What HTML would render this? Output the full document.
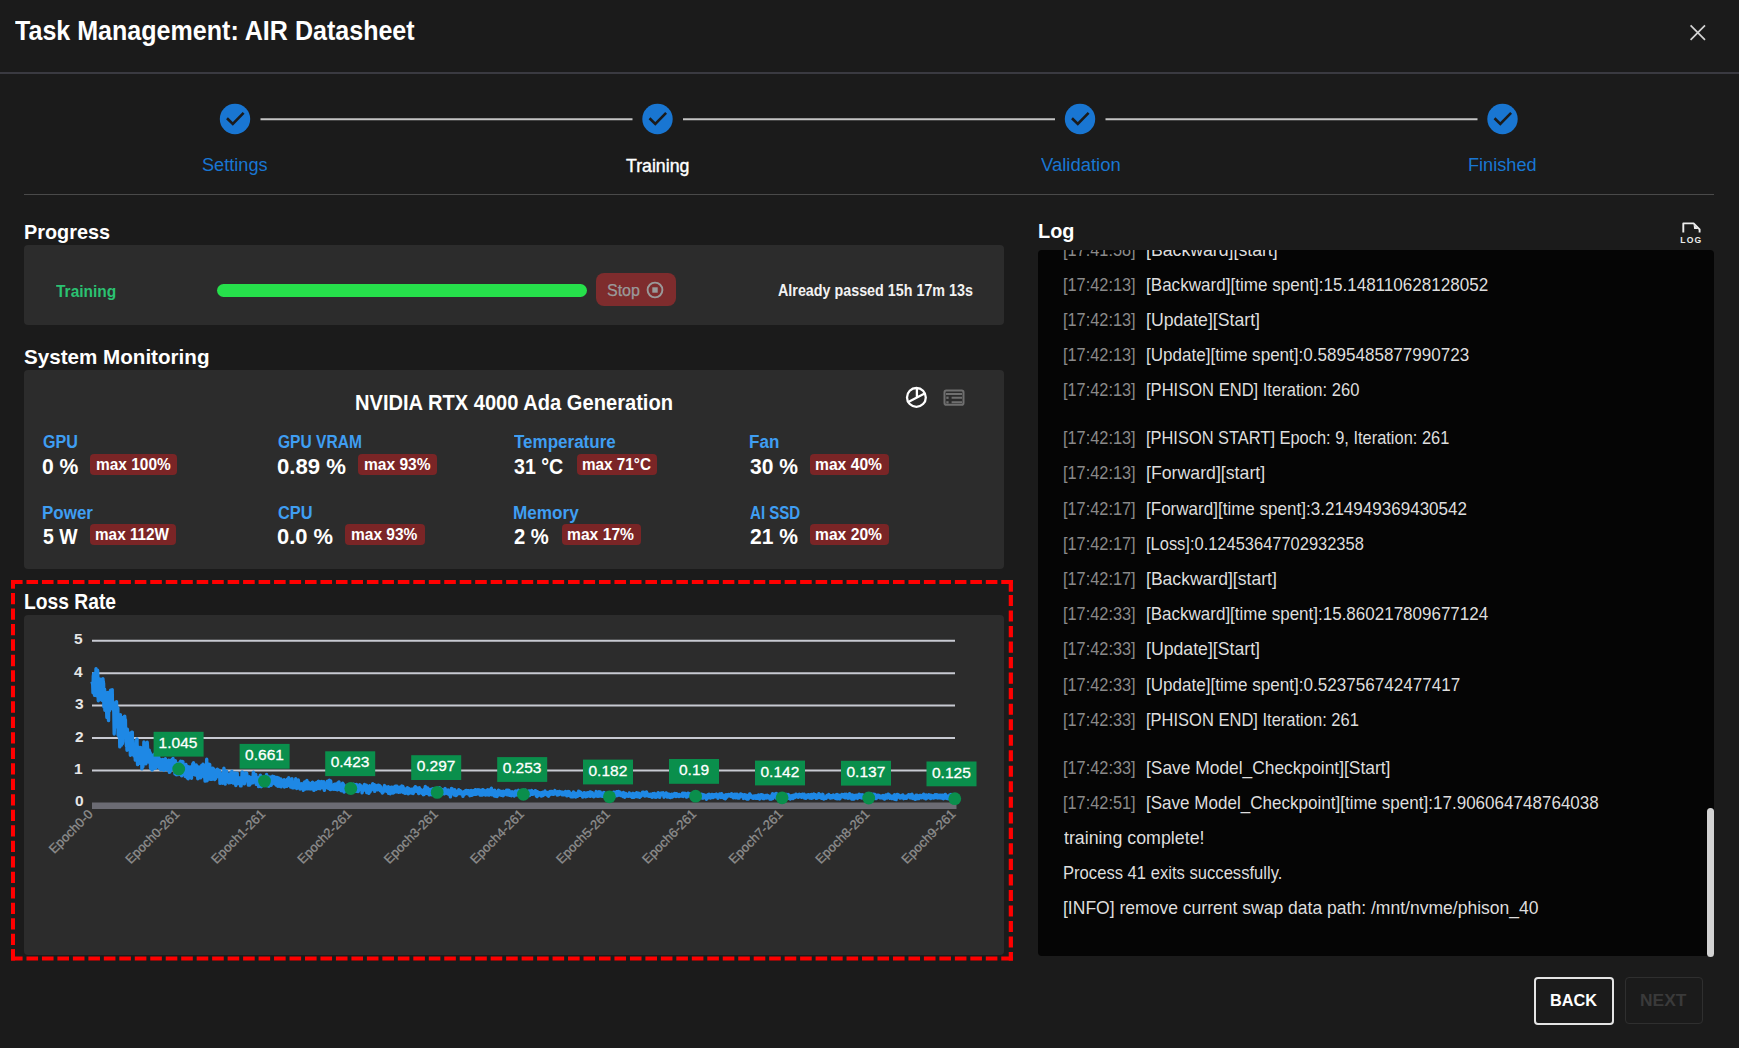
<!DOCTYPE html>
<html><head><meta charset="utf-8"><title>Task Management: AIR Datasheet</title>
<style>
html,body{margin:0;padding:0;}
body{width:1739px;height:1048px;background:#1b1b1b;position:relative;overflow:hidden;font-family:'Liberation Sans', sans-serif;}
.t{position:absolute;white-space:pre;line-height:1;transform-origin:0 0;}
.abs{position:absolute;}
.panel{position:absolute;background:#2c2c2c;border-radius:4px;}
.chart{position:absolute;left:0;top:0;}
</style></head><body>
<header>
<div class="abs" style="left:0;top:72px;width:1739px;height:2px;background:#3a3a41"></div>
<svg class="abs" style="left:1688px;top:23px" width="20" height="20" viewBox="0 0 20 20"><path d="M2.6 2.4 L17 16.8 M17 2.4 L2.6 16.8" stroke="#d4d4d4" stroke-width="1.7"/></svg>
</header>
<nav>
<svg class="abs" style="left:0;top:90px" width="1739" height="60" viewBox="0 90 1739 60">
<circle cx="235" cy="119" r="15.2" fill="#1976d2"/><path d="M227 118.2 L232.8 123.9 L243.6 112.9" fill="none" stroke="#1b1b1b" stroke-width="2.6"/><circle cx="657.5" cy="119" r="15.2" fill="#1976d2"/><path d="M649.5 118.2 L655.3 123.9 L666.1 112.9" fill="none" stroke="#1b1b1b" stroke-width="2.6"/><circle cx="1080" cy="119" r="15.2" fill="#1976d2"/><path d="M1072 118.2 L1077.8 123.9 L1088.6 112.9" fill="none" stroke="#1b1b1b" stroke-width="2.6"/><circle cx="1502.5" cy="119" r="15.2" fill="#1976d2"/><path d="M1494.5 118.2 L1500.3 123.9 L1511.1 112.9" fill="none" stroke="#1b1b1b" stroke-width="2.6"/><line x1="260.5" y1="119.3" x2="632.5" y2="119.3" stroke="#c4c4c4" stroke-width="2"/><line x1="683.0" y1="119.3" x2="1055" y2="119.3" stroke="#c4c4c4" stroke-width="2"/><line x1="1105.5" y1="119.3" x2="1477.5" y2="119.3" stroke="#c4c4c4" stroke-width="2"/></svg>
</nav>
<div class="abs" style="left:24px;top:193.5px;width:1690px;height:1.5px;background:#4a4a4a"></div>
<section>
<div class="panel" style="left:24px;top:245px;width:980px;height:80px"></div>
<div class="abs" style="left:217px;top:283.8px;width:370px;height:13px;border-radius:6.5px;background:#26e04b"></div>
<div class="abs" style="left:596px;top:272.6px;width:80px;height:33.8px;border-radius:8px;background:#7e2c2d"></div>
<svg class="abs" style="left:645px;top:280px" width="20" height="20" viewBox="0 0 20 20"><circle cx="10" cy="10" r="7.4" fill="none" stroke="#9a9a9a" stroke-width="1.9"/><rect x="7.3" y="7.3" width="5.4" height="5.4" fill="#9a9a9a"/></svg>
<div class="panel" style="left:24px;top:370.4px;width:980px;height:199px"></div>
<div class="abs" style="left:90.3px;top:454.3px;width:87.0px;height:20.7px;border-radius:4px;background:#7a2526"></div>
<div class="abs" style="left:358px;top:454.3px;width:79.2px;height:20.7px;border-radius:4px;background:#7a2526"></div>
<div class="abs" style="left:576.9px;top:454.3px;width:80.1px;height:20.7px;border-radius:4px;background:#7a2526"></div>
<div class="abs" style="left:810.4px;top:454.3px;width:78.4px;height:20.7px;border-radius:4px;background:#7a2526"></div>
<div class="abs" style="left:90.3px;top:524.3px;width:85.5px;height:20.7px;border-radius:4px;background:#7a2526"></div>
<div class="abs" style="left:345.4px;top:524.3px;width:79.2px;height:20.7px;border-radius:4px;background:#7a2526"></div>
<div class="abs" style="left:561.9px;top:524.3px;width:78.7px;height:20.7px;border-radius:4px;background:#7a2526"></div>
<div class="abs" style="left:810.4px;top:524.3px;width:78.4px;height:20.7px;border-radius:4px;background:#7a2526"></div>
<svg class="abs" style="left:904px;top:385px" width="25" height="25" viewBox="0 0 25 25"><circle cx="12.4" cy="12.4" r="9.4" fill="none" stroke="#ffffff" stroke-width="2.3"/><path d="M4.3 17 L20.6 8.4 M12.9 12.2 L12.9 3" stroke="#ffffff" stroke-width="2.3" fill="none"/></svg>
<svg class="abs" style="left:940px;top:386px" width="28" height="23" viewBox="0 0 28 23"><rect x="4.5" y="4.5" width="19" height="14.2" rx="1.8" fill="none" stroke="#6f6f6f" stroke-width="2"/><path d="M6 7.9 H22 M11.6 11.8 H22 M11.6 16.3 H22" stroke="#6f6f6f" stroke-width="2"/><rect x="6.3" y="10.6" width="2.3" height="2.3" fill="#6f6f6f"/><rect x="6.3" y="15.2" width="2.3" height="2.3" fill="#6f6f6f"/></svg>
<div class="panel" style="left:24px;top:615px;width:980px;height:340px"></div>
</section>
<section>
<div class="abs" style="left:1038px;top:250px;width:676px;height:706px;border-radius:4px;background:#050505;overflow:hidden">
<div class="abs" style="left:-1038px;top:-250px;width:1739px;height:1048px">
<span class="t" style="left:1062.92px;top:241px;font-size:18.5px;font-weight:400;color:#8a8a8a;transform:scaleX(0.8827);">[17:41:58]</span>
<span class="t" style="left:1146.04px;top:241px;font-size:18.5px;font-weight:400;color:#dedede;transform:scaleX(0.9559);">[Backward][start]</span>
<span class="t" style="left:1062.92px;top:276px;font-size:18.5px;font-weight:400;color:#8a8a8a;transform:scaleX(0.8827);">[17:42:13]</span>
<span class="t" style="left:1146.08px;top:276px;font-size:18.5px;font-weight:400;color:#dedede;transform:scaleX(0.9227);">[Backward][time spent]:15.148110628128052</span>
<span class="t" style="left:1062.92px;top:311px;font-size:18.5px;font-weight:400;color:#8a8a8a;transform:scaleX(0.8827);">[17:42:13]</span>
<span class="t" style="left:1146.04px;top:311px;font-size:18.5px;font-weight:400;color:#dedede;transform:scaleX(0.9559);">[Update][Start]</span>
<span class="t" style="left:1062.92px;top:346px;font-size:18.5px;font-weight:400;color:#8a8a8a;transform:scaleX(0.8827);">[17:42:13]</span>
<span class="t" style="left:1146.08px;top:346px;font-size:18.5px;font-weight:400;color:#dedede;transform:scaleX(0.9215);">[Update][time spent]:0.5895485877990723</span>
<span class="t" style="left:1062.92px;top:381px;font-size:18.5px;font-weight:400;color:#8a8a8a;transform:scaleX(0.8827);">[17:42:13]</span>
<span class="t" style="left:1146.11px;top:381px;font-size:18.5px;font-weight:400;color:#dedede;transform:scaleX(0.8945);">[PHISON END] Iteration: 260</span>
<span class="t" style="left:1062.92px;top:429px;font-size:18.5px;font-weight:400;color:#8a8a8a;transform:scaleX(0.8827);">[17:42:13]</span>
<span class="t" style="left:1146.11px;top:429px;font-size:18.5px;font-weight:400;color:#dedede;transform:scaleX(0.8876);">[PHISON START] Epoch: 9, Iteration: 261</span>
<span class="t" style="left:1062.92px;top:464px;font-size:18.5px;font-weight:400;color:#8a8a8a;transform:scaleX(0.8827);">[17:42:13]</span>
<span class="t" style="left:1146.04px;top:464px;font-size:18.5px;font-weight:400;color:#dedede;transform:scaleX(0.9577);">[Forward][start]</span>
<span class="t" style="left:1062.92px;top:500px;font-size:18.5px;font-weight:400;color:#8a8a8a;transform:scaleX(0.8827);">[17:42:17]</span>
<span class="t" style="left:1146.08px;top:500px;font-size:18.5px;font-weight:400;color:#dedede;transform:scaleX(0.9207);">[Forward][time spent]:3.214949369430542</span>
<span class="t" style="left:1062.92px;top:535px;font-size:18.5px;font-weight:400;color:#8a8a8a;transform:scaleX(0.8827);">[17:42:17]</span>
<span class="t" style="left:1146.11px;top:535px;font-size:18.5px;font-weight:400;color:#dedede;transform:scaleX(0.8897);">[Loss]:0.12453647702932358</span>
<span class="t" style="left:1062.92px;top:570px;font-size:18.5px;font-weight:400;color:#8a8a8a;transform:scaleX(0.8827);">[17:42:17]</span>
<span class="t" style="left:1146.05px;top:570px;font-size:18.5px;font-weight:400;color:#dedede;transform:scaleX(0.9493);">[Backward][start]</span>
<span class="t" style="left:1062.92px;top:605px;font-size:18.5px;font-weight:400;color:#8a8a8a;transform:scaleX(0.8827);">[17:42:33]</span>
<span class="t" style="left:1146.08px;top:605px;font-size:18.5px;font-weight:400;color:#dedede;transform:scaleX(0.9191);">[Backward][time spent]:15.860217809677124</span>
<span class="t" style="left:1062.92px;top:640px;font-size:18.5px;font-weight:400;color:#8a8a8a;transform:scaleX(0.8827);">[17:42:33]</span>
<span class="t" style="left:1146.04px;top:640px;font-size:18.5px;font-weight:400;color:#dedede;transform:scaleX(0.9559);">[Update][Start]</span>
<span class="t" style="left:1062.92px;top:676px;font-size:18.5px;font-weight:400;color:#8a8a8a;transform:scaleX(0.8827);">[17:42:33]</span>
<span class="t" style="left:1146.08px;top:676px;font-size:18.5px;font-weight:400;color:#dedede;transform:scaleX(0.9233);">[Update][time spent]:0.523756742477417</span>
<span class="t" style="left:1062.92px;top:711px;font-size:18.5px;font-weight:400;color:#8a8a8a;transform:scaleX(0.8827);">[17:42:33]</span>
<span class="t" style="left:1146.11px;top:711px;font-size:18.5px;font-weight:400;color:#dedede;transform:scaleX(0.8924);">[PHISON END] Iteration: 261</span>
<span class="t" style="left:1062.92px;top:759px;font-size:18.5px;font-weight:400;color:#8a8a8a;transform:scaleX(0.8827);">[17:42:33]</span>
<span class="t" style="left:1146.06px;top:759px;font-size:18.5px;font-weight:400;color:#dedede;transform:scaleX(0.9391);">[Save Model_Checkpoint][Start]</span>
<span class="t" style="left:1062.92px;top:794px;font-size:18.5px;font-weight:400;color:#8a8a8a;transform:scaleX(0.8827);">[17:42:51]</span>
<span class="t" style="left:1146.08px;top:794px;font-size:18.5px;font-weight:400;color:#dedede;transform:scaleX(0.9210);">[Save Model_Checkpoint][time spent]:17.906064748764038</span>
<span class="t" style="left:1063.50px;top:829px;font-size:18.5px;font-weight:400;color:#dedede;transform:scaleX(0.9621);">training complete!</span>
<span class="t" style="left:1062.60px;top:864px;font-size:18.5px;font-weight:400;color:#dedede;transform:scaleX(0.8979);">Process 41 exits successfully.</span>
<span class="t" style="left:1062.55px;top:899px;font-size:18.5px;font-weight:400;color:#dedede;transform:scaleX(0.9477);">[INFO] remove current swap data path: /mnt/nvme/phison_40</span>
</div></div>
<div class="abs" style="left:1707px;top:807.7px;width:7px;height:149px;border-radius:3.5px;background:#d2d2d2"></div>
<svg class="abs" style="left:1676px;top:218px" width="30" height="30" viewBox="0 0 30 30"><path d="M7.3 14.4 V5.4 H17.6 L23.6 11.4 V14.4" fill="none" stroke="#ececec" stroke-width="1.9" stroke-linejoin="round"/><path d="M17.6 6.6 L18.1 11 L22.4 11 Z" fill="#ececec"/><text x="15.4" y="24.8" text-anchor="middle" font-family="Liberation Sans" font-weight="700" font-size="8.6" fill="#ececec" letter-spacing="1.2">LOG</text></svg>
</section>
<footer>
<div class="abs" style="left:1534.3px;top:977px;width:75.7px;height:44px;border:2px solid #e4e4e4;border-radius:4px"></div>
<div class="abs" style="left:1624.6px;top:977px;width:76.4px;height:45px;border:1.5px solid #2f2f2f;border-radius:4px"></div>
</footer>
<span class="t" style="left:14.50px;top:18px;font-size:27px;font-weight:700;color:#ffffff;transform:scaleX(0.9281);">Task Management: AIR Datasheet</span>
<span class="t" style="left:201.74px;top:156px;font-size:18px;font-weight:400;color:#1976d2;transform:scaleX(1.0078);">Settings</span>
<span class="t" style="left:625.50px;top:157px;font-size:18px;font-weight:400;color:#ffffff;transform:scaleX(0.9844);-webkit-text-stroke:0.4px #fff;">Training</span>
<span class="t" style="left:1040.50px;top:156px;font-size:18px;font-weight:400;color:#1976d2;transform:scaleX(1.0260);">Validation</span>
<span class="t" style="left:1468.24px;top:156px;font-size:18px;font-weight:400;color:#1976d2;transform:scaleX(1.0076);">Finished</span>
<span class="t" style="left:23.56px;top:221px;font-size:21px;font-weight:700;color:#ffffff;transform:scaleX(0.9444);">Progress</span>
<span class="t" style="left:56.00px;top:284px;font-size:16px;font-weight:700;color:#2bc272;transform:scaleX(0.9677);">Training</span>
<span class="t" style="left:607.00px;top:283px;font-size:16px;font-weight:400;color:#9a9a9a;-webkit-text-stroke:0.25px #9a9a9a;">Stop</span>
<span class="t" style="left:777.60px;top:283px;font-size:16px;font-weight:700;color:#f2f2f2;transform:scaleX(0.8945);">Already passed 15h 17m 13s</span>
<span class="t" style="left:24.00px;top:346px;font-size:21px;font-weight:700;color:#ffffff;transform:scaleX(0.9814);">System Monitoring</span>
<span class="t" style="left:355.07px;top:393px;font-size:21.5px;font-weight:700;color:#ffffff;transform:scaleX(0.9349);">NVIDIA RTX 4000 Ada Generation</span>
<span class="t" style="left:43.00px;top:433px;font-size:18px;font-weight:700;color:#3f9ef2;transform:scaleX(0.8947);">GPU</span>
<span class="t" style="left:42.04px;top:456px;font-size:22px;font-weight:700;color:#ffffff;transform:scaleX(0.9595);">0 %</span>
<span class="t" style="left:95.86px;top:456px;font-size:16.5px;font-weight:700;color:#ffffff;transform:scaleX(0.9367);">max 100%</span>
<span class="t" style="left:278.00px;top:433px;font-size:18px;font-weight:700;color:#3f9ef2;transform:scaleX(0.8646);">GPU VRAM</span>
<span class="t" style="left:276.99px;top:456px;font-size:22px;font-weight:700;color:#ffffff;transform:scaleX(1.0060);">0.89 %</span>
<span class="t" style="left:363.66px;top:456px;font-size:16.5px;font-weight:700;color:#ffffff;transform:scaleX(0.9429);">max 93%</span>
<span class="t" style="left:514.40px;top:433px;font-size:18px;font-weight:700;color:#3f9ef2;transform:scaleX(0.9444);">Temperature</span>
<span class="t" style="left:514.40px;top:456px;font-size:22px;font-weight:700;color:#ffffff;transform:scaleX(0.8909);">31 °C</span>
<span class="t" style="left:582.22px;top:456px;font-size:16.5px;font-weight:700;color:#ffffff;transform:scaleX(0.9260);">max 71°C</span>
<span class="t" style="left:748.75px;top:433px;font-size:18px;font-weight:700;color:#3f9ef2;transform:scaleX(0.9467);">Fan</span>
<span class="t" style="left:749.70px;top:456px;font-size:22px;font-weight:700;color:#ffffff;transform:scaleX(0.9560);">30 %</span>
<span class="t" style="left:815.45px;top:456px;font-size:16.5px;font-weight:700;color:#ffffff;transform:scaleX(0.9486);">max 40%</span>
<span class="t" style="left:42.06px;top:504px;font-size:18px;font-weight:700;color:#3f9ef2;transform:scaleX(0.9434);">Power</span>
<span class="t" style="left:43.00px;top:526px;font-size:22px;font-weight:700;color:#ffffff;transform:scaleX(0.8821);">5 W</span>
<span class="t" style="left:95.47px;top:526px;font-size:16.5px;font-weight:700;color:#ffffff;transform:scaleX(0.9278);">max 112W</span>
<span class="t" style="left:278.00px;top:504px;font-size:18px;font-weight:700;color:#3f9ef2;transform:scaleX(0.9081);">CPU</span>
<span class="t" style="left:277.00px;top:526px;font-size:22px;font-weight:700;color:#ffffff;transform:scaleX(0.9964);">0.0 %</span>
<span class="t" style="left:351.21px;top:526px;font-size:16.5px;font-weight:700;color:#ffffff;transform:scaleX(0.9386);">max 93%</span>
<span class="t" style="left:513.45px;top:504px;font-size:18px;font-weight:700;color:#3f9ef2;transform:scaleX(0.9529);">Memory</span>
<span class="t" style="left:514.40px;top:526px;font-size:22px;font-weight:700;color:#ffffff;transform:scaleX(0.9184);">2 %</span>
<span class="t" style="left:567.10px;top:526px;font-size:16.5px;font-weight:700;color:#ffffff;transform:scaleX(0.9486);">max 17%</span>
<span class="t" style="left:749.70px;top:504px;font-size:18px;font-weight:700;color:#3f9ef2;transform:scaleX(0.8367);">AI SSD</span>
<span class="t" style="left:749.70px;top:526px;font-size:22px;font-weight:700;color:#ffffff;transform:scaleX(0.9560);">21 %</span>
<span class="t" style="left:815.45px;top:526px;font-size:16.5px;font-weight:700;color:#ffffff;transform:scaleX(0.9486);">max 20%</span>
<span class="t" style="left:23.62px;top:591px;font-size:22px;font-weight:700;color:#ffffff;transform:scaleX(0.8750);">Loss Rate</span>
<span class="t" style="left:1038.05px;top:220px;font-size:21px;font-weight:700;color:#ffffff;transform:scaleX(0.9459);">Log</span>
<span class="t" style="left:1549.84px;top:992px;font-size:17px;font-weight:700;color:#ffffff;transform:scaleX(0.9583);">BACK</span>
<span class="t" style="left:1640.28px;top:992px;font-size:17px;font-weight:700;color:#3a3a3a;transform:scaleX(1.0222);">NEXT</span>
<svg class="chart" width="1739" height="1048" viewBox="0 0 1739 1048">
<line x1="92" y1="770.5" x2="955" y2="770.5" stroke="#c8cad2" stroke-width="2"/>
<line x1="92" y1="738.1" x2="955" y2="738.1" stroke="#c8cad2" stroke-width="2"/>
<line x1="92" y1="705.6" x2="955" y2="705.6" stroke="#c8cad2" stroke-width="2"/>
<line x1="92" y1="673.2" x2="955" y2="673.2" stroke="#c8cad2" stroke-width="2"/>
<line x1="92" y1="640.8" x2="955" y2="640.8" stroke="#c8cad2" stroke-width="2"/>
<rect x="92" y="802.5" width="864.5" height="6.5" fill="#6b6b73"/>
<path d="M92.0,681.7 92.3,682.9 92.7,684.4 93.0,692.8 93.3,676.3 93.7,673.8 94.0,681.3 94.3,686.4 94.6,695.4 95.0,689.5 95.3,683.3 95.6,686.8 96.0,668.8 96.3,686.8 96.6,695.8 97.0,675.5 97.3,688.0 97.6,670.2 98.0,683.7 98.3,700.7 98.6,678.5 98.9,699.6 99.3,695.7 99.6,696.4 99.9,686.4 100.3,699.5 100.6,679.1 100.9,694.6 101.3,680.8 101.6,691.6 101.9,688.4 102.3,700.5 102.6,688.4 102.9,678.8 103.2,681.6 103.6,683.5 103.9,706.9 104.2,703.5 104.6,689.2 104.9,710.2 105.2,692.4 105.6,693.4 105.9,692.6 106.2,699.6 106.5,707.1 106.9,717.5 107.2,716.4 107.5,701.5 107.9,692.5 108.2,697.3 108.5,720.6 108.9,696.5 109.2,702.6 109.5,710.7 109.9,707.0 110.2,697.7 110.5,690.3 110.8,690.3 111.2,695.6 111.5,701.2 111.8,702.0 112.2,689.6 112.5,708.4 112.8,707.5 113.2,702.0 113.5,710.5 113.8,709.2 114.2,734.0 114.5,721.5 114.8,712.2 115.1,707.3 115.5,703.9 115.8,715.8 116.1,726.9 116.5,701.7 116.8,718.7 117.1,721.3 117.5,712.1 117.8,707.9 118.1,735.0 118.5,734.1 118.8,726.1 119.1,737.1 119.4,718.6 119.8,746.9 120.1,727.9 120.4,714.7 120.8,733.0 121.1,736.9 121.4,745.1 121.8,735.1 122.1,737.0 122.4,743.6 122.8,741.4 123.1,717.4 123.4,719.1 123.7,729.7 124.1,725.6 124.4,725.8 124.7,716.2 125.1,723.2 125.4,719.8 125.7,736.7 126.1,734.4 126.4,745.8 126.7,741.6 127.0,750.2 127.4,729.3 127.7,736.8 128.0,748.3 128.4,736.0 128.7,732.9 129.0,747.3 129.4,749.5 129.7,738.4 130.0,741.3 130.4,755.3 130.7,745.8 131.0,743.5 131.3,745.5 131.7,732.1 132.0,754.4 132.3,732.1 132.7,753.1 133.0,752.5 133.3,754.7 133.7,750.4 134.0,755.8 134.3,748.0 134.7,749.4 135.0,752.9 135.3,760.1 135.6,750.1 136.0,740.7 136.3,740.4 136.6,754.6 137.0,738.9 137.3,760.2 137.6,764.6 138.0,746.8 138.3,749.5 138.6,750.8 139.0,761.5 139.3,750.3 139.6,763.2 139.9,753.9 140.3,763.0 140.6,747.4 140.9,762.6 141.3,751.2 141.6,752.7 141.9,768.9 142.3,755.9 142.6,762.6 142.9,766.7 143.3,748.4 143.6,755.2 143.9,742.0 144.2,745.5 144.6,746.4 144.9,743.2 145.2,745.3 145.6,761.2 145.9,763.8 146.2,749.9 146.6,747.5 146.9,750.0 147.2,742.3 147.5,747.4 147.9,753.9 148.2,760.0 148.5,762.0 148.9,751.8 149.2,750.1 149.5,754.2 149.9,757.4 150.2,752.7 150.5,767.5 150.9,768.7 151.2,759.6 151.5,764.6 151.8,764.1 152.2,770.0 152.5,769.0 152.8,755.1 153.2,754.9 153.5,757.5 153.8,755.5 154.2,755.4 154.5,754.3 154.8,768.5 155.2,766.9 155.5,767.8 155.8,761.5 156.1,761.9 156.5,752.6 156.8,764.1 157.1,754.4 157.5,763.6 157.8,758.8 158.1,764.4 158.5,752.3 158.8,767.5 159.1,759.8 159.5,767.9 159.8,760.7 160.1,762.5 160.4,759.5 160.8,769.8 161.1,760.1 161.4,767.5 161.8,762.2 162.1,764.2 162.4,764.3 162.8,759.4 163.1,765.1 163.4,767.8 163.8,770.4 164.1,770.1 164.4,769.2 164.7,762.9 165.1,764.1 165.4,758.8 165.7,760.9 166.1,767.3 166.4,768.0 166.7,766.9 167.1,769.8 167.4,763.7 167.7,769.0 168.0,766.4 168.4,762.9 168.7,760.1 169.0,763.8 169.4,772.4 169.7,770.9 170.0,762.5 170.4,771.3 170.7,762.8 171.0,760.2 171.4,766.5 171.7,759.9 172.0,762.6 172.3,759.2 172.7,761.0 173.0,758.5 173.3,769.5 173.7,764.8 174.0,765.9 174.3,770.3 174.7,763.4 175.0,773.9 175.3,760.6 175.7,773.3 176.0,765.9 176.3,774.8 176.6,766.7 177.0,765.0 177.3,764.4 177.6,769.8 178.0,774.5 178.3,763.3 178.6,767.8 179.0,763.8 179.3,769.0 179.6,764.0 180.0,774.4 180.3,763.9 180.6,761.2 180.9,774.4 181.3,765.7 181.6,775.8 181.9,774.7 182.3,761.5 182.6,770.5 182.9,761.6 183.3,771.7 183.6,772.9 183.9,771.6 184.3,770.1 184.6,767.2 184.9,771.0 185.2,776.4 185.6,769.3 185.9,764.4 186.2,770.9 186.6,772.0 186.9,774.4 187.2,777.8 187.6,766.4 187.9,774.5 188.2,778.7 188.6,768.8 188.9,766.9 189.2,777.5 189.5,775.7 189.9,773.2 190.2,767.2 190.5,774.3 190.9,774.9 191.2,766.8 191.5,778.2 191.9,769.3 192.2,771.8 192.5,769.0 192.8,763.8 193.2,770.8 193.5,762.8 193.8,764.7 194.2,766.6 194.5,774.5 194.8,772.8 195.2,771.6 195.5,775.0 195.8,769.0 196.2,765.0 196.5,768.7 196.8,772.6 197.1,769.8 197.5,771.6 197.8,778.7 198.1,769.7 198.5,768.0 198.8,766.9 199.1,773.1 199.5,772.0 199.8,776.4 200.1,771.3 200.5,777.9 200.8,772.8 201.1,769.2 201.4,771.5 201.8,765.2 202.1,770.2 202.4,771.1 202.8,773.0 203.1,764.3 203.4,766.7 203.8,776.9 204.1,771.3 204.4,770.4 204.8,777.0 205.1,781.1 205.4,770.6 205.7,769.0 206.1,771.6 206.4,769.9 206.7,759.3 207.1,780.7 207.4,774.7 207.7,779.5 208.1,774.6 208.4,764.0 208.7,775.3 209.1,775.7 209.4,772.8 209.7,764.4 210.0,775.9 210.4,779.2 210.7,768.7 211.0,778.8 211.4,773.0 211.7,776.3 212.0,779.3 212.4,770.1 212.7,768.3 213.0,777.6 213.3,777.3 213.7,768.9 214.0,774.9 214.3,777.9 214.7,779.6 215.0,776.8 215.3,777.8 215.7,778.6 216.0,773.5 216.3,776.9 216.7,774.5 217.0,771.9 217.3,769.1 217.6,775.4 218.0,771.4 218.3,769.8 218.6,776.6 219.0,773.3 219.3,774.8 219.6,770.6 220.0,783.4 220.3,777.6 220.6,781.4 221.0,774.8 221.3,781.1 221.6,780.2 221.9,780.4 222.3,774.0 222.6,783.2 222.9,773.2 223.3,778.9 223.6,781.5 223.9,768.2 224.3,771.9 224.6,770.9 224.9,779.2 225.3,784.0 225.6,773.5 225.9,776.7 226.2,771.5 226.6,771.2 226.9,780.1 227.2,781.8 227.6,776.8 227.9,779.2 228.2,774.2 228.6,782.3 228.9,782.8 229.2,781.1 229.6,774.3 229.9,779.2 230.2,778.7 230.5,782.5 230.9,772.9 231.2,780.6 231.5,779.0 231.9,771.2 232.2,778.6 232.5,778.2 232.9,781.9 233.2,783.1 233.5,782.9 233.8,776.6 234.2,779.7 234.5,780.8 234.8,774.4 235.2,772.9 235.5,780.2 235.8,785.5 236.2,774.9 236.5,777.1 236.8,777.4 237.2,773.3 237.5,782.8 237.8,783.5 238.1,778.5 238.5,780.6 238.8,778.0 239.1,782.8 239.5,780.3 239.8,778.0 240.1,782.0 240.5,785.8 240.8,779.9 241.1,785.9 241.5,777.7 241.8,781.9 242.1,772.0 242.4,772.1 242.8,775.9 243.1,780.6 243.4,778.3 243.8,783.1 244.1,780.8 244.4,783.8 244.8,773.9 245.1,780.0 245.4,778.0 245.8,772.7 246.1,774.2 246.4,775.9 246.7,773.1 247.1,777.2 247.4,780.5 247.7,781.2 248.1,782.6 248.4,785.1 248.7,778.4 249.1,777.4 249.4,776.9 249.7,785.1 250.1,782.1 250.4,778.6 250.7,778.2 251.0,779.2 251.4,777.8 251.7,783.0 252.0,781.4 252.4,778.9 252.7,782.9 253.0,777.4 253.4,772.1 253.7,782.2 254.0,776.0 254.3,782.0 254.7,780.1 255.0,776.9 255.3,782.2 255.7,774.4 256.0,778.9 256.3,784.4 256.7,782.2 257.0,782.6 257.3,784.4 257.7,784.0 258.0,783.9 258.3,777.6 258.6,786.6 259.0,784.5 259.3,782.0 259.6,786.3 260.0,779.2 260.3,775.2 260.6,776.0 261.0,786.3 261.3,786.7 261.6,783.1 262.0,785.5 262.3,783.0 262.6,779.3 262.9,777.3 263.3,784.2 263.6,777.9 263.9,784.6 264.3,781.6 264.6,776.6 264.9,781.6 265.3,781.1 265.6,777.3 265.9,779.0 266.3,785.1 266.6,774.5 266.9,781.3 267.2,778.2 267.6,785.9 267.9,776.6 268.2,779.6 268.6,780.4 268.9,786.2 269.2,785.0 269.6,780.0 269.9,777.0 270.2,781.0 270.6,778.5 270.9,780.4 271.2,785.3 271.5,781.9 271.9,782.3 272.2,776.8 272.5,776.3 272.9,779.6 273.2,778.4 273.5,781.1 273.9,778.8 274.2,776.7 274.5,783.7 274.9,781.8 275.2,779.5 275.5,783.4 275.8,781.8 276.2,785.1 276.5,778.6 276.8,777.5 277.2,785.5 277.5,778.1 277.8,786.3 278.2,780.8 278.5,778.0 278.8,778.8 279.1,781.7 279.5,786.1 279.8,786.1 280.1,786.4 280.5,782.8 280.8,778.9 281.1,786.8 281.5,780.6 281.8,784.4 282.1,783.8 282.5,783.6 282.8,783.6 283.1,782.1 283.4,784.2 283.8,782.2 284.1,779.8 284.4,787.0 284.8,783.8 285.1,781.7 285.4,785.1 285.8,785.6 286.1,780.2 286.4,782.7 286.8,786.4 287.1,780.6 287.4,779.3 287.7,783.1 288.1,784.9 288.4,782.9 288.7,777.8 289.1,780.6 289.4,785.5 289.7,780.4 290.1,784.0 290.4,783.5 290.7,787.0 291.1,781.0 291.4,780.5 291.7,784.2 292.0,778.7 292.4,785.7 292.7,787.9 293.0,784.5 293.4,787.9 293.7,786.2 294.0,785.6 294.4,785.7 294.7,781.7 295.0,787.4 295.4,785.0 295.7,778.8 296.0,787.9 296.3,782.0 296.7,788.5 297.0,780.1 297.3,788.0 297.7,787.0 298.0,785.4 298.3,779.9 298.7,783.6 299.0,785.9 299.3,785.9 299.6,786.0 300.0,789.0 300.3,785.5 300.6,788.3 301.0,787.5 301.3,783.8 301.6,787.8 302.0,786.7 302.3,786.4 302.6,786.2 303.0,787.2 303.3,790.3 303.6,788.5 303.9,782.9 304.3,784.8 304.6,782.0 304.9,782.5 305.3,789.1 305.6,784.9 305.9,783.6 306.3,781.7 306.6,783.1 306.9,780.4 307.3,783.2 307.6,786.2 307.9,788.8 308.2,788.7 308.6,782.6 308.9,788.6 309.2,783.7 309.6,785.8 309.9,787.8 310.2,788.9 310.6,783.4 310.9,783.4 311.2,788.1 311.6,784.7 311.9,788.8 312.2,785.3 312.5,782.3 312.9,785.4 313.2,783.9 313.5,784.1 313.9,790.4 314.2,784.7 314.5,785.6 314.9,785.6 315.2,783.6 315.5,783.1 315.9,785.1 316.2,789.2 316.5,782.7 316.8,787.4 317.2,784.0 317.5,783.9 317.8,782.3 318.2,781.5 318.5,781.2 318.8,788.5 319.2,786.9 319.5,786.2 319.8,788.4 320.1,788.6 320.5,784.0 320.8,784.4 321.1,781.7 321.5,781.6 321.8,787.3 322.1,783.5 322.5,785.0 322.8,782.4 323.1,784.0 323.5,788.2 323.8,781.6 324.1,788.9 324.4,790.3 324.8,783.7 325.1,784.7 325.4,787.9 325.8,785.7 326.1,786.1 326.4,786.6 326.8,785.0 327.1,787.5 327.4,781.2 327.8,781.6 328.1,786.1 328.4,784.8 328.7,788.6 329.1,788.5 329.4,780.3 329.7,782.8 330.1,785.1 330.4,789.6 330.7,781.0 331.1,787.0 331.4,784.5 331.7,786.4 332.1,786.7 332.4,788.4 332.7,786.6 333.0,789.0 333.4,787.1 333.7,789.2 334.0,788.4 334.4,784.2 334.7,785.4 335.0,788.7 335.4,789.3 335.7,787.9 336.0,784.0 336.4,787.0 336.7,784.0 337.0,789.7 337.3,789.8 337.7,789.5 338.0,782.7 338.3,788.6 338.7,787.6 339.0,782.0 339.3,785.1 339.7,787.9 340.0,789.7 340.3,789.6 340.6,788.4 341.0,786.1 341.3,790.7 341.6,789.7 342.0,787.2 342.3,787.0 342.6,783.2 343.0,784.1 343.3,784.1 343.6,786.5 344.0,792.0 344.3,790.8 344.6,786.5 344.9,788.6 345.3,790.8 345.6,788.4 345.9,788.1 346.3,786.0 346.6,788.7 346.9,785.8 347.3,785.2 347.6,788.6 347.9,791.6 348.3,788.6 348.6,789.9 348.9,789.0 349.2,784.5 349.6,792.1 349.9,788.0 350.2,791.8 350.6,787.4 350.9,789.3 351.2,790.2 351.6,789.5 351.9,788.3 352.2,787.0 352.6,784.9 352.9,790.4 353.2,785.0 353.5,785.4 353.9,784.3 354.2,785.1 354.5,784.9 354.9,789.4 355.2,784.8 355.5,791.2 355.9,784.9 356.2,791.3 356.5,784.5 356.9,787.2 357.2,786.1 357.5,787.0 357.8,787.5 358.2,791.6 358.5,789.5 358.8,785.6 359.2,789.5 359.5,786.2 359.8,784.8 360.2,785.1 360.5,785.6 360.8,788.0 361.2,786.3 361.5,787.2 361.8,788.8 362.1,792.8 362.5,789.4 362.8,789.8 363.1,789.7 363.5,790.5 363.8,788.8 364.1,785.3 364.5,784.5 364.8,786.9 365.1,789.1 365.4,787.2 365.8,787.3 366.1,789.0 366.4,785.2 366.8,792.6 367.1,789.3 367.4,788.4 367.8,788.0 368.1,792.2 368.4,792.7 368.8,793.3 369.1,792.8 369.4,789.1 369.7,785.7 370.1,791.6 370.4,790.0 370.7,790.4 371.1,788.6 371.4,788.8 371.7,789.0 372.1,788.3 372.4,787.8 372.7,783.6 373.1,786.3 373.4,786.6 373.7,786.8 374.0,790.0 374.4,784.6 374.7,791.4 375.0,789.4 375.4,789.1 375.7,786.0 376.0,786.5 376.4,788.4 376.7,786.8 377.0,787.6 377.4,785.5 377.7,789.8 378.0,789.5 378.3,788.1 378.7,785.2 379.0,786.4 379.3,788.5 379.7,785.7 380.0,789.5 380.3,790.7 380.7,786.6 381.0,790.3 381.3,791.0 381.7,791.8 382.0,791.2 382.3,793.0 382.6,791.1 383.0,792.4 383.3,790.5 383.6,789.5 384.0,789.2 384.3,786.9 384.6,785.6 385.0,788.6 385.3,789.8 385.6,786.6 385.9,791.0 386.3,790.4 386.6,789.9 386.9,787.2 387.3,791.5 387.6,788.0 387.9,790.5 388.3,786.8 388.6,793.3 388.9,791.9 389.3,791.1 389.6,789.7 389.9,791.9 390.2,793.7 390.6,791.6 390.9,789.6 391.2,787.1 391.6,788.4 391.9,790.0 392.2,789.7 392.6,787.5 392.9,793.1 393.2,788.5 393.6,792.8 393.9,788.7 394.2,789.8 394.5,786.8 394.9,786.5 395.2,786.2 395.5,790.6 395.9,786.1 396.2,791.9 396.5,788.1 396.9,786.1 397.2,788.2 397.5,789.7 397.9,791.1 398.2,790.3 398.5,792.3 398.8,790.9 399.2,789.8 399.5,791.5 399.8,787.3 400.2,792.0 400.5,791.1 400.8,791.9 401.2,790.2 401.5,790.7 401.8,785.9 402.2,789.6 402.5,788.0 402.8,786.5 403.1,787.2 403.5,792.6 403.8,788.5 404.1,788.8 404.5,788.7 404.8,790.8 405.1,793.4 405.5,790.5 405.8,789.7 406.1,790.7 406.4,789.8 406.8,789.2 407.1,793.0 407.4,787.8 407.8,788.0 408.1,788.3 408.4,793.9 408.8,790.9 409.1,788.6 409.4,793.1 409.8,792.4 410.1,789.9 410.4,791.0 410.7,791.1 411.1,791.6 411.4,793.0 411.7,789.1 412.1,791.2 412.4,792.6 412.7,790.4 413.1,793.5 413.4,789.6 413.7,792.5 414.1,788.3 414.4,787.8 414.7,789.1 415.0,788.8 415.4,786.6 415.7,790.7 416.0,791.1 416.4,788.9 416.7,789.5 417.0,788.0 417.4,791.5 417.7,788.9 418.0,789.1 418.4,792.5 418.7,793.5 419.0,791.3 419.3,787.8 419.7,791.4 420.0,790.6 420.3,789.2 420.7,790.6 421.0,792.4 421.3,790.9 421.7,793.3 422.0,791.5 422.3,790.6 422.7,793.4 423.0,793.4 423.3,794.7 423.6,791.7 424.0,794.6 424.3,789.2 424.6,789.1 425.0,791.9 425.3,786.5 425.6,790.3 426.0,793.4 426.3,787.8 426.6,791.4 426.9,791.3 427.3,791.4 427.6,787.9 427.9,793.7 428.3,793.8 428.6,789.7 428.9,792.4 429.3,794.9 429.6,794.0 429.9,789.5 430.3,792.6 430.6,793.5 430.9,793.2 431.2,794.4 431.6,789.1 431.9,794.7 432.2,793.0 432.6,791.2 432.9,788.6 433.2,790.2 433.6,793.9 433.9,791.3 434.2,792.5 434.6,793.3 434.9,791.9 435.2,789.4 435.5,793.9 435.9,790.9 436.2,792.0 436.5,789.9 436.9,789.8 437.2,789.6 437.5,790.4 437.9,790.8 438.2,791.2 438.5,788.2 438.9,790.5 439.2,791.6 439.5,787.7 439.8,793.0 440.2,788.3 440.5,789.6 440.8,791.6 441.2,792.5 441.5,790.2 441.8,789.6 442.2,794.1 442.5,790.8 442.8,790.9 443.2,792.6 443.5,792.2 443.8,790.4 444.1,793.0 444.5,793.8 444.8,789.0 445.1,788.6 445.5,791.3 445.8,793.0 446.1,791.1 446.5,790.6 446.8,793.1 447.1,793.5 447.5,792.2 447.8,793.0 448.1,789.9 448.4,792.3 448.8,794.4 449.1,790.9 449.4,791.5 449.8,793.1 450.1,794.4 450.4,796.9 450.8,794.2 451.1,793.3 451.4,788.5 451.7,793.7 452.1,788.8 452.4,792.7 452.7,790.4 453.1,792.0 453.4,792.2 453.7,792.7 454.1,794.8 454.4,795.0 454.7,789.8 455.1,793.9 455.4,795.0 455.7,793.0 456.0,795.5 456.4,791.6 456.7,795.1 457.0,791.3 457.4,793.4 457.7,793.4 458.0,790.9 458.4,792.9 458.7,789.8 459.0,792.3 459.4,793.4 459.7,791.2 460.0,792.9 460.3,790.6 460.7,793.4 461.0,793.7 461.3,793.3 461.7,792.4 462.0,792.3 462.3,793.8 462.7,794.6 463.0,796.4 463.3,791.9 463.7,793.6 464.0,792.3 464.3,794.5 464.6,791.7 465.0,791.3 465.3,792.3 465.6,790.6 466.0,791.6 466.3,790.4 466.6,793.3 467.0,792.7 467.3,792.6 467.6,793.7 468.0,790.6 468.3,791.5 468.6,790.8 468.9,793.8 469.3,791.7 469.6,794.4 469.9,795.7 470.3,793.5 470.6,790.6 470.9,790.5 471.3,792.9 471.6,793.3 471.9,795.4 472.2,791.7 472.6,795.0 472.9,790.7 473.2,790.7 473.6,793.0 473.9,792.3 474.2,791.5 474.6,794.2 474.9,794.1 475.2,789.6 475.6,789.8 475.9,791.0 476.2,794.4 476.5,791.8 476.9,791.5 477.2,790.2 477.5,793.7 477.9,789.6 478.2,792.1 478.5,790.6 478.9,793.9 479.2,789.9 479.5,790.8 479.9,791.9 480.2,795.1 480.5,792.2 480.8,792.3 481.2,790.5 481.5,795.0 481.8,790.2 482.2,795.1 482.5,789.6 482.8,790.4 483.2,789.9 483.5,793.8 483.8,792.7 484.2,794.2 484.5,794.3 484.8,790.7 485.1,793.5 485.5,795.0 485.8,793.0 486.1,793.3 486.5,793.5 486.8,790.8 487.1,790.2 487.5,794.9 487.8,789.7 488.1,792.5 488.5,794.7 488.8,793.9 489.1,795.1 489.4,794.6 489.8,793.9 490.1,789.7 490.4,793.2 490.8,792.1 491.1,790.7 491.4,788.2 491.8,790.5 492.1,794.9 492.4,792.9 492.7,794.8 493.1,793.4 493.4,792.9 493.7,793.9 494.1,791.5 494.4,796.0 494.7,790.3 495.1,795.2 495.4,792.5 495.7,794.8 496.1,796.2 496.4,794.3 496.7,791.9 497.0,796.5 497.4,795.7 497.7,792.5 498.0,794.5 498.4,790.3 498.7,794.9 499.0,794.3 499.4,790.8 499.7,794.1 500.0,792.7 500.4,793.5 500.7,792.0 501.0,794.4 501.3,795.3 501.7,791.5 502.0,793.9 502.3,793.7 502.7,792.1 503.0,795.7 503.3,791.1 503.7,794.2 504.0,793.5 504.3,794.8 504.7,792.7 505.0,794.4 505.3,791.7 505.6,794.1 506.0,792.8 506.3,791.4 506.6,790.3 507.0,790.6 507.3,794.9 507.6,790.1 508.0,790.9 508.3,790.6 508.6,792.3 509.0,790.4 509.3,792.9 509.6,795.4 509.9,791.6 510.3,793.2 510.6,792.2 510.9,793.3 511.3,795.8 511.6,792.2 511.9,793.0 512.3,791.8 512.6,792.6 512.9,794.0 513.2,792.5 513.6,793.2 513.9,794.4 514.2,796.0 514.6,794.8 514.9,794.3 515.2,791.2 515.6,793.6 515.9,791.0 516.2,793.3 516.6,793.8 516.9,794.9 517.2,794.1 517.5,794.4 517.9,793.7 518.2,790.9 518.5,790.4 518.9,793.5 519.2,794.0 519.5,791.2 519.9,793.8 520.2,792.5 520.5,792.4 520.9,792.5 521.2,793.6 521.5,793.8 521.8,793.1 522.2,794.7 522.5,794.5 522.8,793.4 523.2,792.8 523.5,792.8 523.8,792.4 524.2,792.6 524.5,792.7 524.8,793.9 525.2,791.9 525.5,790.1 525.8,791.5 526.1,795.3 526.5,792.1 526.8,791.7 527.1,792.6 527.5,794.9 527.8,793.1 528.1,794.5 528.5,794.8 528.8,792.5 529.1,791.0 529.5,795.5 529.8,792.9 530.1,794.5 530.4,791.1 530.8,793.1 531.1,792.2 531.4,791.8 531.8,790.6 532.1,792.5 532.4,794.4 532.8,792.7 533.1,793.2 533.4,794.1 533.8,793.7 534.1,793.0 534.4,791.4 534.7,793.1 535.1,792.7 535.4,790.6 535.7,791.0 536.1,792.4 536.4,796.0 536.7,796.1 537.1,796.5 537.4,791.8 537.7,793.1 538.0,794.6 538.4,795.3 538.7,794.9 539.0,794.2 539.4,794.9 539.7,792.6 540.0,792.9 540.4,793.6 540.7,792.9 541.0,792.8 541.4,796.1 541.7,795.4 542.0,795.9 542.3,792.9 542.7,792.4 543.0,794.3 543.3,795.4 543.7,793.6 544.0,793.7 544.3,793.1 544.7,793.5 545.0,790.9 545.3,793.1 545.7,792.1 546.0,793.4 546.3,794.4 546.6,793.1 547.0,793.7 547.3,795.2 547.6,794.6 548.0,792.5 548.3,795.3 548.6,796.2 549.0,793.9 549.3,792.3 549.6,794.9 550.0,791.4 550.3,791.4 550.6,794.4 550.9,793.3 551.3,792.8 551.6,793.7 551.9,791.5 552.3,791.7 552.6,794.2 552.9,794.2 553.3,792.5 553.6,794.4 553.9,793.9 554.3,793.5 554.6,791.7 554.9,790.6 555.2,792.3 555.6,793.2 555.9,793.6 556.2,793.4 556.6,791.9 556.9,794.4 557.2,795.0 557.6,791.8 557.9,794.0 558.2,793.7 558.5,793.9 558.9,794.6 559.2,793.0 559.5,791.5 559.9,791.7 560.2,793.5 560.5,792.4 560.9,792.9 561.2,792.1 561.5,793.9 561.9,793.7 562.2,794.7 562.5,794.0 562.8,792.2 563.2,794.8 563.5,792.4 563.8,792.6 564.2,794.8 564.5,794.2 564.8,794.3 565.2,794.2 565.5,791.4 565.8,791.9 566.2,793.4 566.5,794.3 566.8,795.8 567.1,794.4 567.5,793.0 567.8,794.7 568.1,791.5 568.5,794.8 568.8,795.2 569.1,791.8 569.5,793.0 569.8,792.9 570.1,795.7 570.5,795.5 570.8,794.8 571.1,796.9 571.4,796.9 571.8,793.9 572.1,795.5 572.4,794.9 572.8,795.0 573.1,796.9 573.4,791.9 573.8,793.4 574.1,793.6 574.4,796.1 574.8,793.2 575.1,793.2 575.4,795.1 575.7,797.1 576.1,794.1 576.4,793.4 576.7,793.7 577.1,794.7 577.4,794.4 577.7,796.3 578.1,795.5 578.4,792.9 578.7,791.1 579.0,792.3 579.4,794.7 579.7,791.8 580.0,795.3 580.4,792.5 580.7,793.6 581.0,792.4 581.4,793.7 581.7,795.5 582.0,794.4 582.4,795.8 582.7,797.0 583.0,795.7 583.3,794.8 583.7,794.5 584.0,794.9 584.3,792.6 584.7,793.1 585.0,793.4 585.3,795.0 585.7,796.9 586.0,793.7 586.3,793.2 586.7,795.7 587.0,796.3 587.3,796.3 587.6,792.8 588.0,792.9 588.3,793.7 588.6,793.1 589.0,793.5 589.3,794.0 589.6,793.1 590.0,792.1 590.3,796.3 590.6,791.9 591.0,792.7 591.3,794.0 591.6,794.7 591.9,794.9 592.3,792.6 592.6,795.5 592.9,794.7 593.3,796.4 593.6,796.8 593.9,794.3 594.3,794.3 594.6,796.2 594.9,794.3 595.3,794.4 595.6,795.8 595.9,792.9 596.2,791.6 596.6,795.1 596.9,796.0 597.2,794.8 597.6,793.9 597.9,796.3 598.2,794.8 598.6,794.0 598.9,791.6 599.2,793.2 599.5,794.3 599.9,796.0 600.2,791.9 600.5,795.8 600.9,792.8 601.2,795.5 601.5,794.9 601.9,796.1 602.2,796.3 602.5,794.4 602.9,795.5 603.2,795.1 603.5,796.1 603.8,792.5 604.2,794.9 604.5,796.6 604.8,794.5 605.2,795.4 605.5,793.5 605.8,796.2 606.2,793.7 606.5,797.3 606.8,796.2 607.2,794.1 607.5,794.5 607.8,794.5 608.1,793.3 608.5,794.6 608.8,794.6 609.1,796.9 609.5,796.7 609.8,795.9 610.1,796.4 610.5,795.3 610.8,796.9 611.1,795.9 611.5,794.3 611.8,793.4 612.1,793.6 612.4,795.4 612.8,795.8 613.1,793.9 613.4,793.3 613.8,792.2 614.1,793.8 614.4,794.6 614.8,794.7 615.1,796.1 615.4,794.4 615.8,795.8 616.1,795.5 616.4,793.3 616.7,791.8 617.1,792.8 617.4,791.7 617.7,795.5 618.1,795.2 618.4,792.7 618.7,791.6 619.1,794.2 619.4,794.2 619.7,791.9 620.1,793.3 620.4,792.6 620.7,795.6 621.0,795.0 621.4,793.9 621.7,795.0 622.0,795.0 622.4,793.9 622.7,795.8 623.0,796.5 623.4,792.5 623.7,795.0 624.0,794.0 624.3,794.7 624.7,797.2 625.0,796.1 625.3,795.0 625.7,793.5 626.0,795.7 626.3,794.4 626.7,796.0 627.0,794.6 627.3,795.3 627.7,795.9 628.0,796.3 628.3,795.8 628.6,794.6 629.0,795.1 629.3,792.9 629.6,796.1 630.0,796.2 630.3,793.6 630.6,794.8 631.0,795.3 631.3,795.5 631.6,796.1 632.0,797.2 632.3,796.7 632.6,793.4 632.9,796.1 633.3,793.4 633.6,797.4 633.9,797.4 634.3,794.0 634.6,797.0 634.9,796.1 635.3,793.7 635.6,796.0 635.9,794.2 636.3,795.1 636.6,792.7 636.9,793.0 637.2,796.7 637.6,794.0 637.9,793.6 638.2,794.9 638.6,793.2 638.9,793.6 639.2,795.9 639.6,797.3 639.9,794.9 640.2,793.9 640.6,795.7 640.9,796.2 641.2,795.6 641.5,794.3 641.9,794.7 642.2,792.9 642.5,792.3 642.9,793.1 643.2,795.1 643.5,792.3 643.9,793.3 644.2,793.2 644.5,795.3 644.8,796.1 645.2,794.4 645.5,792.6 645.8,795.3 646.2,792.2 646.5,792.0 646.8,795.7 647.2,795.8 647.5,795.5 647.8,795.2 648.2,794.7 648.5,794.2 648.8,794.9 649.1,796.4 649.5,795.1 649.8,795.4 650.1,794.8 650.5,794.2 650.8,796.6 651.1,794.4 651.5,795.2 651.8,796.7 652.1,797.3 652.5,793.8 652.8,793.7 653.1,795.9 653.4,794.3 653.8,796.8 654.1,794.8 654.4,793.4 654.8,797.1 655.1,795.0 655.4,795.9 655.8,794.4 656.1,797.2 656.4,795.2 656.8,793.9 657.1,793.9 657.4,795.7 657.7,796.4 658.1,792.7 658.4,793.6 658.7,796.7 659.1,796.9 659.4,795.5 659.7,797.3 660.1,793.4 660.4,793.8 660.7,795.1 661.1,793.7 661.4,793.1 661.7,793.4 662.0,794.8 662.4,793.9 662.7,792.9 663.0,792.8 663.4,794.1 663.7,793.7 664.0,797.2 664.4,796.5 664.7,794.4 665.0,796.3 665.3,794.1 665.7,794.6 666.0,794.5 666.3,792.9 666.7,794.1 667.0,793.9 667.3,797.1 667.7,796.9 668.0,794.3 668.3,795.2 668.7,795.7 669.0,794.2 669.3,797.2 669.6,794.8 670.0,795.4 670.3,794.7 670.6,797.6 671.0,794.6 671.3,796.8 671.6,794.2 672.0,796.0 672.3,797.1 672.6,795.5 673.0,795.6 673.3,794.1 673.6,796.3 673.9,793.9 674.3,795.8 674.6,793.4 674.9,794.4 675.3,795.3 675.6,794.2 675.9,796.5 676.3,795.7 676.6,793.7 676.9,796.2 677.3,795.9 677.6,795.1 677.9,794.8 678.2,795.7 678.6,795.1 678.9,796.5 679.2,794.4 679.6,794.8 679.9,794.8 680.2,795.5 680.6,795.2 680.9,796.1 681.2,795.1 681.6,795.5 681.9,794.9 682.2,795.9 682.5,793.2 682.9,794.3 683.2,796.5 683.5,794.7 683.9,794.6 684.2,793.3 684.5,793.8 684.9,794.6 685.2,795.4 685.5,793.4 685.8,794.4 686.2,795.7 686.5,797.0 686.8,796.8 687.2,794.9 687.5,795.7 687.8,796.4 688.2,793.3 688.5,795.8 688.8,795.4 689.2,794.7 689.5,794.5 689.8,794.1 690.1,794.5 690.5,795.9 690.8,794.0 691.1,796.1 691.5,797.3 691.8,797.0 692.1,796.0 692.5,794.2 692.8,797.6 693.1,794.1 693.5,797.6 693.8,795.7 694.1,796.1 694.4,796.6 694.8,797.1 695.1,795.4 695.4,797.0 695.8,797.0 696.1,797.4 696.4,796.2 696.8,796.9 697.1,795.5 697.4,797.5 697.8,796.3 698.1,794.2 698.4,795.1 698.7,794.4 699.1,795.1 699.4,794.7 699.7,797.0 700.1,796.4 700.4,796.8 700.7,795.2 701.1,797.7 701.4,796.8 701.7,794.1 702.1,796.2 702.4,798.0 702.7,796.5 703.0,798.2 703.4,795.4 703.7,794.8 704.0,796.3 704.4,797.0 704.7,795.2 705.0,796.0 705.4,797.4 705.7,795.7 706.0,796.2 706.4,799.3 706.7,796.4 707.0,796.3 707.3,795.3 707.7,794.8 708.0,797.0 708.3,797.8 708.7,795.6 709.0,795.7 709.3,794.3 709.7,796.2 710.0,795.8 710.3,796.9 710.6,798.0 711.0,796.0 711.3,796.9 711.6,796.9 712.0,794.5 712.3,795.1 712.6,796.2 713.0,797.6 713.3,794.9 713.6,796.0 714.0,794.7 714.3,796.7 714.6,796.1 714.9,796.0 715.3,796.8 715.6,794.7 715.9,794.5 716.3,794.1 716.6,794.3 716.9,795.0 717.3,796.3 717.6,795.9 717.9,798.2 718.3,794.9 718.6,796.4 718.9,795.1 719.2,794.8 719.6,794.1 719.9,795.7 720.2,796.6 720.6,797.1 720.9,797.4 721.2,795.6 721.6,793.6 721.9,795.4 722.2,797.4 722.6,795.4 722.9,796.1 723.2,795.3 723.5,796.6 723.9,798.2 724.2,797.0 724.5,798.2 724.9,795.3 725.2,796.3 725.5,798.7 725.9,794.7 726.2,797.1 726.5,797.0 726.9,797.1 727.2,795.4 727.5,795.8 727.8,794.7 728.2,795.4 728.5,795.3 728.8,794.6 729.2,795.1 729.5,795.8 729.8,794.8 730.2,794.6 730.5,796.3 730.8,795.3 731.1,796.4 731.5,794.7 731.8,793.8 732.1,794.6 732.5,796.5 732.8,797.2 733.1,795.9 733.5,797.9 733.8,796.7 734.1,794.4 734.5,797.1 734.8,794.2 735.1,794.9 735.4,796.8 735.8,797.7 736.1,794.5 736.4,796.2 736.8,797.1 737.1,794.2 737.4,796.9 737.8,795.6 738.1,798.1 738.4,796.9 738.8,796.7 739.1,798.0 739.4,795.4 739.7,796.8 740.1,794.7 740.4,795.8 740.7,793.9 741.1,795.7 741.4,794.2 741.7,795.5 742.1,794.5 742.4,795.7 742.7,797.0 743.1,797.0 743.4,798.4 743.7,797.8 744.0,796.9 744.4,794.7 744.7,794.7 745.0,795.3 745.4,796.8 745.7,798.3 746.0,796.8 746.4,798.1 746.7,795.1 747.0,799.0 747.4,798.7 747.7,796.0 748.0,796.1 748.3,799.1 748.7,796.3 749.0,796.4 749.3,795.4 749.7,794.0 750.0,794.6 750.3,794.8 750.7,795.8 751.0,795.2 751.3,797.5 751.6,796.4 752.0,797.6 752.3,797.8 752.6,797.4 753.0,798.2 753.3,796.5 753.6,797.8 754.0,798.1 754.3,796.0 754.6,797.9 755.0,796.6 755.3,796.7 755.6,798.2 755.9,795.7 756.3,798.2 756.6,796.2 756.9,797.1 757.3,796.5 757.6,798.4 757.9,795.5 758.3,795.2 758.6,795.0 758.9,795.5 759.3,798.4 759.6,799.0 759.9,796.5 760.2,796.4 760.6,796.1 760.9,795.5 761.2,794.7 761.6,797.9 761.9,797.3 762.2,795.3 762.6,795.1 762.9,796.1 763.2,798.5 763.6,796.0 763.9,798.2 764.2,798.1 764.5,798.4 764.9,796.7 765.2,796.3 765.5,795.5 765.9,797.1 766.2,795.8 766.5,798.0 766.9,795.9 767.2,795.3 767.5,796.9 767.9,795.7 768.2,797.8 768.5,797.7 768.8,797.4 769.2,798.3 769.5,798.3 769.8,798.9 770.2,797.7 770.5,796.2 770.8,796.0 771.2,799.0 771.5,798.8 771.8,796.5 772.1,797.2 772.5,793.8 772.8,798.5 773.1,794.4 773.5,795.5 773.8,796.6 774.1,795.5 774.5,795.8 774.8,794.9 775.1,794.0 775.5,796.5 775.8,797.3 776.1,793.5 776.4,798.1 776.8,796.9 777.1,793.9 777.4,795.5 777.8,796.4 778.1,797.4 778.4,795.4 778.8,795.2 779.1,796.0 779.4,797.8 779.8,796.0 780.1,797.9 780.4,797.0 780.7,797.6 781.1,798.1 781.4,795.7 781.7,796.4 782.1,796.7 782.4,797.2 782.7,796.8 783.1,797.5 783.4,796.2 783.7,794.8 784.1,797.4 784.4,795.1 784.7,797.5 785.0,796.5 785.4,797.5 785.7,798.0 786.0,796.2 786.4,794.4 786.7,795.7 787.0,797.1 787.4,796.2 787.7,798.2 788.0,796.4 788.4,794.6 788.7,798.2 789.0,796.6 789.3,795.5 789.7,797.5 790.0,798.3 790.3,798.9 790.7,796.1 791.0,796.4 791.3,797.1 791.7,797.7 792.0,795.7 792.3,797.4 792.7,796.9 793.0,798.6 793.3,795.1 793.6,796.6 794.0,797.7 794.3,795.3 794.6,797.5 795.0,795.8 795.3,795.9 795.6,796.1 796.0,794.1 796.3,796.6 796.6,795.3 796.9,795.3 797.3,795.4 797.6,797.1 797.9,795.1 798.3,797.4 798.6,794.5 798.9,794.4 799.3,794.3 799.6,794.6 799.9,795.1 800.3,796.1 800.6,795.8 800.9,796.7 801.2,794.7 801.6,797.4 801.9,797.4 802.2,797.1 802.6,794.1 802.9,796.6 803.2,796.5 803.6,795.7 803.9,796.1 804.2,794.3 804.6,798.1 804.9,798.0 805.2,795.4 805.5,796.5 805.9,798.3 806.2,797.0 806.5,797.8 806.9,797.6 807.2,795.0 807.5,796.1 807.9,795.8 808.2,796.1 808.5,794.7 808.9,796.2 809.2,796.5 809.5,796.6 809.8,798.1 810.2,797.3 810.5,796.8 810.8,794.6 811.2,797.7 811.5,794.5 811.8,798.3 812.2,795.1 812.5,795.0 812.8,797.2 813.2,797.6 813.5,797.3 813.8,793.9 814.1,795.2 814.5,795.4 814.8,795.5 815.1,795.0 815.5,794.8 815.8,797.9 816.1,798.2 816.5,796.4 816.8,796.4 817.1,796.5 817.4,798.0 817.8,797.7 818.1,795.7 818.4,795.0 818.8,793.7 819.1,794.5 819.4,796.3 819.8,797.5 820.1,797.5 820.4,796.1 820.8,795.0 821.1,795.6 821.4,795.7 821.7,798.3 822.1,796.1 822.4,795.9 822.7,794.3 823.1,795.2 823.4,796.8 823.7,799.0 824.1,798.2 824.4,798.2 824.7,797.1 825.1,798.1 825.4,798.2 825.7,797.3 826.0,798.4 826.4,797.2 826.7,796.8 827.0,795.5 827.4,795.6 827.7,795.4 828.0,796.2 828.4,797.0 828.7,794.5 829.0,796.7 829.4,796.2 829.7,795.9 830.0,797.4 830.3,798.1 830.7,795.8 831.0,796.2 831.3,795.8 831.7,795.9 832.0,797.9 832.3,795.4 832.7,795.5 833.0,795.5 833.3,795.0 833.7,795.7 834.0,795.9 834.3,797.5 834.6,796.0 835.0,798.1 835.3,797.7 835.6,796.1 836.0,798.6 836.3,794.8 836.6,797.7 837.0,794.5 837.3,798.8 837.6,796.7 837.9,796.4 838.3,796.1 838.6,796.7 838.9,795.2 839.3,798.7 839.6,795.7 839.9,798.7 840.3,797.3 840.6,795.4 840.9,796.2 841.3,796.4 841.6,795.8 841.9,794.5 842.2,796.8 842.6,794.7 842.9,795.4 843.2,796.6 843.6,796.5 843.9,797.2 844.2,794.6 844.6,794.3 844.9,797.7 845.2,797.8 845.6,796.6 845.9,797.7 846.2,795.3 846.5,794.3 846.9,795.8 847.2,794.8 847.5,795.2 847.9,798.3 848.2,795.8 848.5,794.7 848.9,797.6 849.2,798.0 849.5,793.7 849.9,794.3 850.2,796.7 850.5,796.7 850.8,797.0 851.2,798.4 851.5,795.3 851.8,799.0 852.2,799.1 852.5,795.0 852.8,798.5 853.2,797.5 853.5,796.9 853.8,797.8 854.2,799.0 854.5,796.8 854.8,797.5 855.1,795.5 855.5,796.2 855.8,795.6 856.1,796.1 856.5,795.3 856.8,797.0 857.1,797.0 857.5,798.4 857.8,796.1 858.1,796.2 858.4,797.5 858.8,794.6 859.1,795.8 859.4,794.3 859.8,794.9 860.1,794.7 860.4,796.2 860.8,797.6 861.1,796.6 861.4,796.1 861.8,797.9 862.1,794.7 862.4,796.1 862.7,795.0 863.1,798.1 863.4,798.1 863.7,797.3 864.1,798.3 864.4,797.4 864.7,798.1 865.1,798.1 865.4,796.9 865.7,798.4 866.1,796.6 866.4,795.6 866.7,797.6 867.0,794.0 867.4,796.9 867.7,794.2 868.0,798.2 868.4,795.5 868.7,799.0 869.0,797.2 869.4,797.5 869.7,794.5 870.0,794.6 870.4,797.6 870.7,796.0 871.0,797.0 871.3,794.0 871.7,796.8 872.0,798.3 872.3,796.7 872.7,795.8 873.0,797.6 873.3,796.1 873.7,794.3 874.0,795.6 874.3,795.9 874.7,794.4 875.0,798.2 875.3,797.1 875.6,798.2 876.0,798.6 876.3,798.4 876.6,798.0 877.0,797.5 877.3,795.3 877.6,796.8 878.0,795.9 878.3,795.9 878.6,796.1 879.0,795.4 879.3,797.5 879.6,797.5 879.9,797.7 880.3,797.9 880.6,797.9 880.9,797.5 881.3,796.1 881.6,796.4 881.9,797.8 882.3,796.8 882.6,797.9 882.9,796.4 883.2,795.6 883.6,796.2 883.9,796.8 884.2,798.9 884.6,799.0 884.9,798.1 885.2,798.3 885.6,795.7 885.9,794.9 886.2,796.4 886.6,797.7 886.9,798.0 887.2,797.5 887.5,796.1 887.9,795.3 888.2,794.2 888.5,796.4 888.9,795.5 889.2,794.8 889.5,797.6 889.9,798.2 890.2,795.7 890.5,797.7 890.9,796.7 891.2,797.7 891.5,796.1 891.8,798.6 892.2,798.1 892.5,797.8 892.8,798.0 893.2,796.6 893.5,795.8 893.8,798.2 894.2,798.9 894.5,794.8 894.8,799.2 895.2,795.3 895.5,797.9 895.8,799.5 896.1,799.6 896.5,797.1 896.8,795.5 897.1,794.5 897.5,794.5 897.8,796.0 898.1,797.0 898.5,794.9 898.8,795.6 899.1,795.6 899.5,797.5 899.8,796.9 900.1,798.1 900.4,796.9 900.8,797.7 901.1,797.2 901.4,795.8 901.8,797.7 902.1,797.0 902.4,796.8 902.8,794.9 903.1,797.6 903.4,797.5 903.7,798.7 904.1,797.1 904.4,797.1 904.7,796.8 905.1,796.3 905.4,798.3 905.7,797.3 906.1,797.4 906.4,798.3 906.7,795.9 907.1,796.5 907.4,797.1 907.7,797.0 908.0,796.2 908.4,796.1 908.7,794.7 909.0,796.3 909.4,795.2 909.7,795.9 910.0,797.7 910.4,794.9 910.7,796.7 911.0,795.8 911.4,795.8 911.7,798.0 912.0,794.2 912.3,796.1 912.7,795.6 913.0,796.1 913.3,798.5 913.7,797.9 914.0,798.1 914.3,798.3 914.7,797.8 915.0,797.8 915.3,799.4 915.7,797.8 916.0,795.3 916.3,798.9 916.6,798.8 917.0,795.3 917.3,797.4 917.6,796.0 918.0,796.1 918.3,797.7 918.6,797.5 919.0,798.6 919.3,798.2 919.6,795.5 920.0,796.2 920.3,796.7 920.6,797.5 920.9,795.5 921.3,795.9 921.6,797.8 921.9,796.7 922.3,796.2 922.6,796.3 922.9,797.0 923.3,797.0 923.6,794.3 923.9,794.9 924.2,798.0 924.6,795.0 924.9,797.1 925.2,796.9 925.6,797.4 925.9,798.8 926.2,794.9 926.6,798.5 926.9,798.0 927.2,795.9 927.6,797.7 927.9,796.8 928.2,797.3 928.5,795.7 928.9,794.8 929.2,794.9 929.5,797.6 929.9,796.7 930.2,796.5 930.5,798.6 930.9,796.7 931.2,795.3 931.5,795.8 931.9,797.2 932.2,797.7 932.5,796.9 932.8,795.9 933.2,798.0 933.5,797.8 933.8,798.0 934.2,797.8 934.5,795.3 934.8,797.3 935.2,794.8 935.5,795.8 935.8,797.5 936.2,796.7 936.5,796.4 936.8,794.6 937.1,796.3 937.5,797.9 937.8,795.5 938.1,796.9 938.5,795.7 938.8,797.4 939.1,795.3 939.5,797.9 939.8,795.6 940.1,797.4 940.5,795.2 940.8,796.4 941.1,798.0 941.4,796.5 941.8,797.9 942.1,795.3 942.4,797.3 942.8,797.8 943.1,795.3 943.4,798.7 943.8,796.3 944.1,795.7 944.4,795.5 944.7,796.0 945.1,796.4 945.4,794.5 945.7,798.1 946.1,795.9 946.4,798.2 946.7,795.7 947.1,798.5 947.4,798.0 947.7,797.3 948.1,798.6 948.4,797.7 948.7,798.7 949.0,797.8 949.4,798.5 949.7,795.0 950.0,798.1 950.4,795.4 950.7,794.8 951.0,794.5 951.4,795.6 951.7,797.3 952.0,796.5 952.4,796.8 952.7,797.9 953.0,798.6 953.3,797.2 953.7,798.9 954.0,796.2 954.3,798.6 954.7,797.0 955.0,795.4" fill="none" stroke="#1e88e5" stroke-width="3.4" stroke-linejoin="round"/>
<circle cx="178.7" cy="769.0" r="6.4" fill="#0a8f4c"/>
<circle cx="264.5" cy="781.1" r="6.4" fill="#0a8f4c"/>
<circle cx="350.8" cy="788.5" r="6.4" fill="#0a8f4c"/>
<circle cx="437.2" cy="792.4" r="6.4" fill="#0a8f4c"/>
<circle cx="523.4" cy="794.3" r="6.4" fill="#0a8f4c"/>
<circle cx="609.4" cy="796.8" r="6.4" fill="#0a8f4c"/>
<circle cx="695.6" cy="796.2" r="6.4" fill="#0a8f4c"/>
<circle cx="782.1" cy="797.8" r="6.4" fill="#0a8f4c"/>
<circle cx="868.7" cy="798.0" r="6.4" fill="#0a8f4c"/>
<circle cx="954.8" cy="798.7" r="6.4" fill="#0a8f4c"/>
<rect x="153.6" y="731.8" width="50" height="24.8" fill="#0a8f4c"/>
<rect x="239.6" y="743.9" width="50" height="24.8" fill="#0a8f4c"/>
<rect x="325.2" y="751.3" width="50" height="24.8" fill="#0a8f4c"/>
<rect x="411.2" y="755.2" width="50" height="24.8" fill="#0a8f4c"/>
<rect x="497.2" y="757.1" width="50" height="24.8" fill="#0a8f4c"/>
<rect x="583.0" y="759.6" width="50" height="24.8" fill="#0a8f4c"/>
<rect x="669.0" y="759.0" width="50" height="24.8" fill="#0a8f4c"/>
<rect x="755.0" y="760.6" width="50" height="24.8" fill="#0a8f4c"/>
<rect x="841.0" y="760.8" width="50" height="24.8" fill="#0a8f4c"/>
<rect x="926.5" y="761.5" width="50" height="24.8" fill="#0a8f4c"/>
<text x="86.8" y="808.2" transform="rotate(-45 86.8 808.2)" text-anchor="end" font-family="Liberation Sans" font-size="13" fill="#8e8e8e" stroke="#8e8e8e" stroke-width="0.3" dominant-baseline="hanging">Epoch0-0</text>
<text x="173.5" y="808.2" transform="rotate(-45 173.5 808.2)" text-anchor="end" font-family="Liberation Sans" font-size="13" fill="#8e8e8e" stroke="#8e8e8e" stroke-width="0.3" dominant-baseline="hanging">Epoch0-261</text>
<text x="259.3" y="808.2" transform="rotate(-45 259.3 808.2)" text-anchor="end" font-family="Liberation Sans" font-size="13" fill="#8e8e8e" stroke="#8e8e8e" stroke-width="0.3" dominant-baseline="hanging">Epoch1-261</text>
<text x="345.6" y="808.2" transform="rotate(-45 345.6 808.2)" text-anchor="end" font-family="Liberation Sans" font-size="13" fill="#8e8e8e" stroke="#8e8e8e" stroke-width="0.3" dominant-baseline="hanging">Epoch2-261</text>
<text x="432.0" y="808.2" transform="rotate(-45 432.0 808.2)" text-anchor="end" font-family="Liberation Sans" font-size="13" fill="#8e8e8e" stroke="#8e8e8e" stroke-width="0.3" dominant-baseline="hanging">Epoch3-261</text>
<text x="518.2" y="808.2" transform="rotate(-45 518.2 808.2)" text-anchor="end" font-family="Liberation Sans" font-size="13" fill="#8e8e8e" stroke="#8e8e8e" stroke-width="0.3" dominant-baseline="hanging">Epoch4-261</text>
<text x="604.2" y="808.2" transform="rotate(-45 604.2 808.2)" text-anchor="end" font-family="Liberation Sans" font-size="13" fill="#8e8e8e" stroke="#8e8e8e" stroke-width="0.3" dominant-baseline="hanging">Epoch5-261</text>
<text x="690.4" y="808.2" transform="rotate(-45 690.4 808.2)" text-anchor="end" font-family="Liberation Sans" font-size="13" fill="#8e8e8e" stroke="#8e8e8e" stroke-width="0.3" dominant-baseline="hanging">Epoch6-261</text>
<text x="776.9" y="808.2" transform="rotate(-45 776.9 808.2)" text-anchor="end" font-family="Liberation Sans" font-size="13" fill="#8e8e8e" stroke="#8e8e8e" stroke-width="0.3" dominant-baseline="hanging">Epoch7-261</text>
<text x="863.5" y="808.2" transform="rotate(-45 863.5 808.2)" text-anchor="end" font-family="Liberation Sans" font-size="13" fill="#8e8e8e" stroke="#8e8e8e" stroke-width="0.3" dominant-baseline="hanging">Epoch8-261</text>
<text x="949.6" y="808.2" transform="rotate(-45 949.6 808.2)" text-anchor="end" font-family="Liberation Sans" font-size="13" fill="#8e8e8e" stroke="#8e8e8e" stroke-width="0.3" dominant-baseline="hanging">Epoch9-261</text>
</svg>
<span class="t" style="left:75.00px;top:793px;font-size:15.5px;font-weight:700;color:#e6e6e6;">0</span>
<span class="t" style="left:74.00px;top:761px;font-size:15.5px;font-weight:700;color:#e6e6e6;">1</span>
<span class="t" style="left:75.00px;top:729px;font-size:15.5px;font-weight:700;color:#e6e6e6;">2</span>
<span class="t" style="left:75.00px;top:696px;font-size:15.5px;font-weight:700;color:#e6e6e6;">3</span>
<span class="t" style="left:74.00px;top:664px;font-size:15.5px;font-weight:700;color:#e6e6e6;">4</span>
<span class="t" style="left:74.00px;top:631px;font-size:15.5px;font-weight:700;color:#e6e6e6;">5</span>
<span class="t" style="left:158.60px;top:735px;font-size:15.5px;font-weight:400;color:#ffffff;-webkit-text-stroke:0.3px #fff;">1.045</span>
<span class="t" style="left:245.10px;top:747px;font-size:15.5px;font-weight:400;color:#ffffff;-webkit-text-stroke:0.3px #fff;">0.661</span>
<span class="t" style="left:330.70px;top:754px;font-size:15.5px;font-weight:400;color:#ffffff;-webkit-text-stroke:0.3px #fff;">0.423</span>
<span class="t" style="left:416.70px;top:758px;font-size:15.5px;font-weight:400;color:#ffffff;-webkit-text-stroke:0.3px #fff;">0.297</span>
<span class="t" style="left:502.70px;top:760px;font-size:15.5px;font-weight:400;color:#ffffff;-webkit-text-stroke:0.3px #fff;">0.253</span>
<span class="t" style="left:588.50px;top:763px;font-size:15.5px;font-weight:400;color:#ffffff;-webkit-text-stroke:0.3px #fff;">0.182</span>
<span class="t" style="left:679.00px;top:762px;font-size:15.5px;font-weight:400;color:#ffffff;-webkit-text-stroke:0.3px #fff;">0.19</span>
<span class="t" style="left:760.50px;top:764px;font-size:15.5px;font-weight:400;color:#ffffff;-webkit-text-stroke:0.3px #fff;">0.142</span>
<span class="t" style="left:846.50px;top:764px;font-size:15.5px;font-weight:400;color:#ffffff;-webkit-text-stroke:0.3px #fff;">0.137</span>
<span class="t" style="left:932.00px;top:765px;font-size:15.5px;font-weight:400;color:#ffffff;-webkit-text-stroke:0.3px #fff;">0.125</span>
<svg class="abs" style="left:0;top:0;pointer-events:none" width="1739" height="1048" viewBox="0 0 1739 1048"><g stroke="#ff0000" fill="none"><path d="M11 582.05 H1013" stroke-width="4.1" stroke-dasharray="11.6 3.873"/><path d="M11 958.45 H1013" stroke-width="4.1" stroke-dasharray="11.6 3.873"/><path d="M13 592.9 V946" stroke-width="4" stroke-dasharray="11.3 4.19"/><path d="M1010.85 595 V948" stroke-width="4.2" stroke-dasharray="11.1 4.42"/></g><g fill="#ff0000"><rect x="11" y="580" width="4" height="8.7"/><rect x="11" y="949.1" width="4" height="11.4"/><rect x="1008.75" y="580" width="4.2" height="11.7"/><rect x="1008.75" y="952" width="4.2" height="8.6"/></g></svg>
</body></html>
